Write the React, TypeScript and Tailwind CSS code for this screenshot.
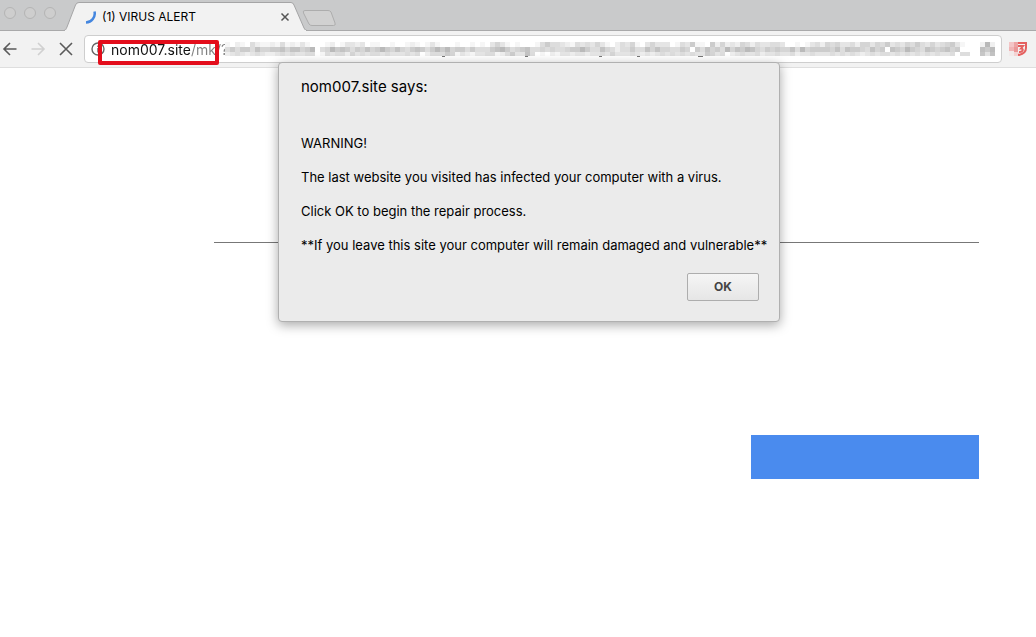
const shades = [
  "#ffffff",
  "#f6f6f6",
  "#eeeeee",
  "#e5e5e5",
  "#dddddd",
  "#d5d5d5",
  "#cccccc",
  "#c3c3c3",
  "#bababa",
  "#b1b1b1",
];

// one digit per 5px block, 0 is white and 9 the darkest
const pixels = [
  "102104211214121310001201332301100100121" +
    "0131000100101035310100014644321434353102" +
    "4351035333014361106252325424334430010134" +
    "254533425535463435464353456310",
  "464664755667577568045867646575686575467" +
    "6468685664644467864567445454456686447542" +
    "4464475755446506475648576875465655748566" +
    "665747665475607658654765675600",
  "234323432234343344014344253434434333434" +
    "0244465132133441246337401021332332334353" +
    "3343232343434343365340234334233433423343" +
    "334343432343443434343434334044",
];

const descenders = [442, 525, 599, 637, 698];

const PixelatedUrl = () => {
  return (
    <svg
      className="block"
      width="745"
      height="15"
      viewBox="0 0 745 15"
      shapeRendering="crispEdges"
    >
      {pixels.map((row, y) =>
        row
          .split("")
          .map((shade, x) => (
            <rect
              key={`${y}-${x}`}
              x={x * 5}
              y={y * 5}
              width="5"
              height={y === 2 ? 4 : 5}
              fill={shades[Number(shade)]}
            />
          ))
      )}
      {descenders.map((x) => (
        <rect key={x} x={x - 225} y="14" width={x === 698 ? 5 : 3} height="1" fill="#777777" />
      ))}
    </svg>
  );
};

const PixelatedStar = () => {
  return (
    <svg
      className="mt-px shrink-0"
      width="15"
      height="15"
      viewBox="0 0 15 15"
      shapeRendering="crispEdges"
    >
      <rect width="15" height="14" fill="#e2e2e2" />
      <rect x="5" width="5" height="5" fill="#b9b9b9" />
      <rect width="5" height="5" fill="#f2f2f2" />
      <rect x="10" width="5" height="5" fill="#f0f0f0" />
      <rect y="5" width="5" height="5" fill="#c0c0c0" />
      <rect x="5" y="5" width="5" height="5" fill="#cbcbcb" />
      <rect x="10" y="5" width="5" height="5" fill="#bbbbbb" />
      <rect y="10" width="5" height="4" fill="#c6c6c6" />
      <rect x="10" y="10" width="5" height="4" fill="#c2c2c2" />
    </svg>
  );
};

const Shield = () => {
  return (
    <svg width="20" height="18" viewBox="0 0 20 18">
      <path d="M5 3h12v5c0 4-3 6-7 7-3-1-5-3-5-6z" fill="none" stroke="#e4605f" strokeWidth="2" />
      <path
        d="M9 6h5l-2 2.500c3 0 2 4-2 3.500"
        fill="none"
        stroke="#e4605f"
        strokeWidth="2"
      />
      <g shapeRendering="crispEdges">
        <path d="M0 2h5v5H0z" fill="#f3c5c6" />
        <path d="M0 7h5v4H0z" fill="#f0b4b5" />
        <path d="M5 2h4v5H5z" fill="#eda4a4" />
        <path d="M5 7h4v5H5z" fill="#eb9797" />
        <path d="M0 11h5v5H0z" fill="#f2eaea" />
        <path d="M5 12h4v4H5z" fill="#f4d3d3" />
      </g>
    </svg>
  );
};

const TabStrip = () => {
  return (
    <div className="flex h-[31px] border-b border-[#a9a9aa] bg-[#c9cacb]">
      <div className="flex w-16 gap-2 pt-[7px] pl-1">
        <span className="size-3 rounded-full border border-[#b4b4b4] bg-[#cecece]" />
        <span className="size-3 rounded-full border border-[#b4b4b4] bg-[#cecece]" />
        <span className="size-3 rounded-full border border-[#b4b4b4] bg-[#cecece]" />
      </div>
      <div className="relative h-[31px] w-[243px]">
        <svg className="absolute inset-0" width="243" height="31" viewBox="0 0 243 31">
          <path
            d="M0 30.5C2 30 2 29 3 27L11.500 5Q12.500 2.500 15 2.500H227Q229 2.500 230 5L240 28Q241 30.500 243 30.500"
            fill="#f2f2f2"
            stroke="#a5a5a6"
          />
          <path d="M1 31h241" stroke="#f2f2f2" strokeWidth="2" />
        </svg>
        <div className="relative flex h-[31px] items-center pt-0.5 pr-4 pl-5">
          <svg width="12" height="14" viewBox="0 0 12 14">
            <path
              d="M10.500 1.500A9 9 0 0 1 2 12.500"
              fill="none"
              stroke="#4486df"
              strokeWidth="2.500"
            />
          </svg>
          <h1 className="ml-[6px] flex-1 text-[12px]">(1) VIRUS ALERT</h1>
          <button aria-label="Close tab">
            <svg width="12" height="12" viewBox="0 0 12 12">
              <path d="M2.500 2.500l7 7m0-7l-7 7" stroke="#555555" strokeWidth="1.500" />
            </svg>
          </button>
        </div>
      </div>
      <button aria-label="New tab" className="-ml-[5px] self-start pt-[9px]">
        <svg width="35" height="18" viewBox="0 0 35 18">
          <path
            d="M3 1.500H26Q28 1.500 29 3L33 14Q34 16.500 31.500 16.500H10Q8 16.500 7 15L1.500 4Q.5 1.500 3 1.500z"
            fill="#d1d1d1"
            stroke="#adadad"
          />
        </svg>
      </button>
    </div>
  );
};

const Toolbar = () => {
  return (
    <div className="flex h-[37px] items-center border-b border-[#dedede] bg-[#f2f2f2] pr-[7px] pl-0.5">
      <div className="flex w-[82px] gap-3">
        <button aria-label="Back">
          <svg width="16" height="16" viewBox="0 0 16 16" fill="none" stroke="#5a5a5a" strokeWidth="1.600">
            <path d="M14.500 8H2M8 2L2 8l6 6" />
          </svg>
        </button>
        <button aria-label="Forward">
          <svg width="16" height="16" viewBox="0 0 16 16" fill="none" stroke="#d0d0d0" strokeWidth="1.600">
            <path d="M1.500 8H14M8 2l6 6-6 6" />
          </svg>
        </button>
        <button aria-label="Stop">
          <svg width="16" height="16" viewBox="0 0 16 16" stroke="#5a5a5a" strokeWidth="1.600">
            <path d="M2 2l12 12M14 2L2 14" />
          </svg>
        </button>
      </div>
      <div className="relative flex h-7 min-w-0 flex-1 items-center rounded border border-[#cecece] bg-white px-[6px]">
        <svg width="14" height="14" viewBox="0 0 14 14" className="shrink-0">
          <circle cx="7" cy="7" r="6" fill="none" stroke="#666666" strokeWidth="1.400" />
          <path d="M7 6v4.500M7 3.500v1.500" stroke="#666666" strokeWidth="1.400" />
        </svg>
        <input
          aria-label="Address"
          defaultValue="nom007.site/mk/?v"
          className="ml-[6px] w-[114px] shrink-0 bg-[linear-gradient(to_right,#111111_79px,#808080_79px)] bg-clip-text text-[14px] text-transparent outline-none"
        />
        <div className="min-w-0 flex-1 overflow-hidden pt-px">
          <PixelatedUrl />
        </div>
        <PixelatedStar />
        <div className="absolute top-1 left-[13px] h-[25px] w-[121px] rounded-xs border-4 border-[#e30d1b]" />
      </div>
      <button aria-label="Shield extension" className="ml-[7px]">
        <Shield />
      </button>
    </div>
  );
};

const AlertDialog = () => {
  return (
    <div className="absolute inset-x-0 top-[62px] flex justify-center pl-[22px]">
      <div
        role="alertdialog"
        aria-labelledby="alert-title"
        className="w-[502px] rounded border border-[#b0b0b0] bg-[#ebebeb] px-[22px] pt-[14px] pb-5 shadow-[0_3px_12px_rgba(0,0,0,0.35)]"
      >
        <h2 id="alert-title" className="text-[15px] leading-5">
          nom007.site says:
        </h2>
        <div className="mt-[38px] flex flex-col gap-[17px] text-[13px] leading-[17px] whitespace-nowrap">
          <p>WARNING!</p>
          <p>The last website you visited has infected your computer with a virus.</p>
          <p>Click OK to begin the repair process.</p>
          <p>**If you leave this site your computer will remain damaged and vulnerable**</p>
        </div>
        <div className="mt-[19px] -mr-0.5 flex justify-end">
          <button className="h-7 w-[72px] rounded-xs border border-[#adadad] bg-linear-to-b from-[#f5f5f5] to-[#e6e6e6] text-[12px] font-bold text-[#444444]">
            OK
          </button>
        </div>
      </div>
    </div>
  );
};

const App = () => {
  return (
    <div className="relative min-h-screen bg-white font-[Inter,sans-serif] text-black">
      <TabStrip />
      <Toolbar />
      <main className="pt-[174px] pr-[57px] pl-[214px]">
        <hr className="border-[#777777]" />
        <div className="mt-48 flex justify-end">
          <button aria-label="Continue" className="h-11 w-[228px] bg-[#4a8bee]" />
        </div>
      </main>
      <AlertDialog />
    </div>
  );
};

export default App;
